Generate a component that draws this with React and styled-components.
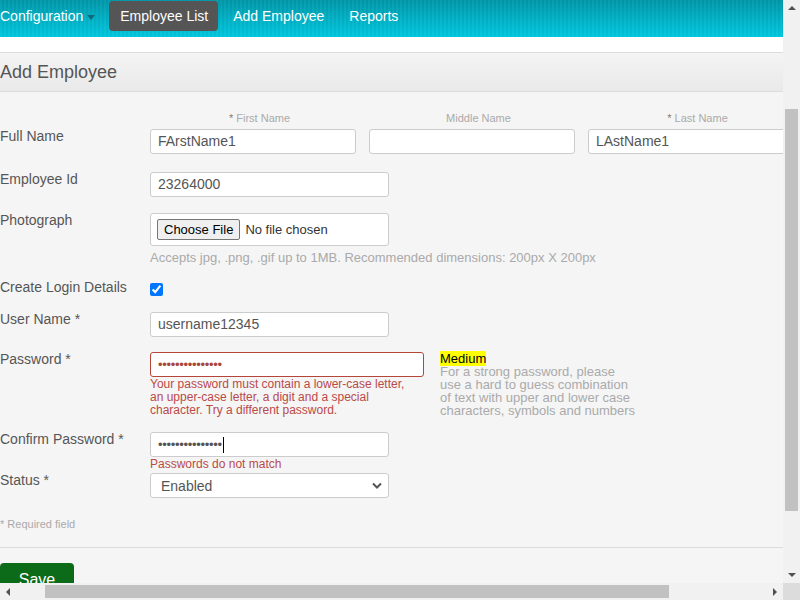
import React from "react";
import styled, { createGlobalStyle } from "styled-components";

const Global = createGlobalStyle`
  html, body { margin: 0; padding: 0; overflow: hidden; }
  body { font-family: "Liberation Sans", Arial, sans-serif; background: #f5f5f5; }
`;

export default function App() {
  return (
    <>
      <Global />
      <Viewport>
        <Content>
          <NavBar>
            <NavItem $first>
              Configuration <Caret />
            </NavItem>
            <NavItem $active>Employee List</NavItem>
            <NavItem>Add Employee</NavItem>
            <NavItem>Reports</NavItem>
          </NavBar>
          <Band />
          <Heading>Add Employee</Heading>

          <Form>
            <Row $mt={20}>
              <Label />
              <SubLabel>
                <Star>* </Star>First Name
              </SubLabel>
              <SubLabel>Middle Name</SubLabel>
              <SubLabel>
                <Star>* </Star>Last Name
              </SubLabel>
            </Row>

            <Row $mt={4}>
              <Label>Full Name</Label>
              <TextBox $w={206} $gap={13}>FArstName1</TextBox>
              <TextBox $w={206} $gap={13} />
              <TextBox $w={206}>LAstName1</TextBox>
            </Row>

            <Row $mt={18}>
              <Label>Employee Id</Label>
              <TextBox $w={239}>23264000</TextBox>
            </Row>

            <Row $mt={16}>
              <Label>Photograph</Label>
              <FileBox>
                <FileButton>Choose File</FileButton>
                <span>No file chosen</span>
              </FileBox>
            </Row>
            <Row $mt={5}>
              <Label />
              <Hint>Accepts jpg, .png, .gif up to 1MB. Recommended dimensions: 200px X 200px</Hint>
            </Row>

            <Row $mt={15}>
              <Label>Create Login Details</Label>
              <Check type="checkbox" defaultChecked />
            </Row>

            <Row $mt={16}>
              <Label>User Name *</Label>
              <TextBox $w={239}>username12345</TextBox>
            </Row>

            <Row $mt={15}>
              <Label>Password *</Label>
              <Column>
                <TextBox $w={274} $error>
                  <Dots $error>•••••••••••••••</Dots>
                </TextBox>
                <ErrorText>
                  Your password must contain a lower-case letter,
                  <br />
                  an upper-case letter, a digit and a special
                  <br />
                  character. Try a different password.
                </ErrorText>
              </Column>
              <Strength>
                <Medium>Medium</Medium>
                <StrengthHint>
                  For a strong password, please
                  <br />
                  use a hard to guess combination
                  <br />
                  of text with upper and lower case
                  <br />
                  characters, symbols and numbers
                </StrengthHint>
              </Strength>
            </Row>

            <Row $mt={15}>
              <Label>Confirm Password *</Label>
              <Column>
                <TextBox $w={239}>
                  <Dots>•••••••••••••••</Dots>
                  <TextCaret />
                </TextBox>
                <ErrorText>Passwords do not match</ErrorText>
              </Column>
            </Row>

            <Row $mt={2}>
              <Label>Status *</Label>
              <SelectBox>
                <span>Enabled</span>
                <svg width="10" height="7" viewBox="0 0 10 7">
                  <path d="M1 1.5l4 4 4-4" fill="none" stroke="#555" strokeWidth="2" />
                </svg>
              </SelectBox>
            </Row>

            <Required>* Required field</Required>
            <Divider />
            <SaveButton>Save</SaveButton>
          </Form>
        </Content>

        <VScroll>
          <Arrow $dir="up" />
          <VThumb />
          <Arrow $dir="down" />
        </VScroll>
        <HScroll>
          <Arrow $dir="left" />
          <HThumb />
          <Arrow $dir="right" />
        </HScroll>
        <Corner />
      </Viewport>
    </>
  );
}

// styles
const Viewport = styled.div`
  width: 800px;
  height: 600px;
  display: grid;
  grid-template-columns: 783px 17px;
  grid-template-rows: 583px 17px;
  overflow: hidden;
`;

const Content = styled.div`
  overflow: hidden;
  background: #f5f5f5;
  color: #555;
`;

const NavBar = styled.nav`
  height: 37px;
  box-sizing: border-box;
  padding-top: 1px;
  display: flex;
  align-items: flex-start;
  background: repeating-linear-gradient(
      90deg,
      rgba(255, 255, 255, 0.035) 0 2px,
      rgba(0, 0, 0, 0.02) 2px 4px
    ),
    linear-gradient(#0097a9, #00c7df);
`;

const NavItem = styled.div`
  height: 30px;
  line-height: 30px;
  padding: ${(p) => (p.$first ? "0 14px 0 0" : "0 10px 0 11px")};
  margin-right: ${(p) => (p.$first ? "0" : "4px")};
  font-size: 14px;
  color: #fff;
  border-radius: 4px;
  white-space: nowrap;
  display: flex;
  align-items: center;
  background: ${(p) => (p.$active ? "#555" : "transparent")};
`;

const Caret = styled.span`
  display: inline-block;
  margin-left: 4px;
  margin-top: 2px;
  border-left: 4px solid transparent;
  border-right: 4px solid transparent;
  border-top: 5px solid #0b6c7a;
`;

const Band = styled.div`
  height: 15px;
  background: #fff;
`;

const Heading = styled.h1`
  margin: 0;
  height: 38px;
  line-height: 38px;
  font-size: 18px;
  font-weight: normal;
  color: #555;
  border-top: 1px solid #dcdcdc;
  border-bottom: 1px solid #dcdcdc;
  background: linear-gradient(#f4f4f4, #e9e9e9);
`;

const Form = styled.div`
  display: flex;
  flex-direction: column;
`;

const Row = styled.div`
  display: flex;
  align-items: flex-start;
  margin-top: ${(p) => p.$mt || 0}px;
`;

const Label = styled.div`
  width: 150px;
  flex: none;
  font-size: 14px;
  line-height: 14px;
  color: #555;
  white-space: nowrap;
`;

const SubLabel = styled.div`
  width: 219px;
  flex: none;
  text-align: center;
  font-size: 11px;
  line-height: 13px;
  color: #aaa;
`;

const Star = styled.span`
  color: #8a7a6a;
`;

const TextBox = styled.div`
  width: ${(p) => p.$w}px;
  height: 25px;
  flex: none;
  box-sizing: border-box;
  margin-right: ${(p) => p.$gap || 0}px;
  padding: 0 7px;
  border: 1px solid ${(p) => (p.$error ? "#b5473a" : "#ccc")};
  border-radius: 3px;
  background: #fff;
  font-size: 14px;
  line-height: 23px;
  color: #555;
  display: flex;
  align-items: center;
  white-space: nowrap;
`;

const Dots = styled.span`
  font-size: 13px;
  letter-spacing: -0.3px;
  color: ${(p) => (p.$error ? "#a8473a" : "#555")};
`;

const TextCaret = styled.span`
  width: 1px;
  height: 16px;
  background: #000;
  margin-left: 1px;
`;

const FileBox = styled.div`
  width: 239px;
  height: 33px;
  box-sizing: border-box;
  padding: 0 6px;
  border: 1px solid #ccc;
  border-radius: 3px;
  background: #fff;
  display: flex;
  align-items: center;
  gap: 5px;
  font-size: 13px;
  color: #333;
`;

const FileButton = styled.div`
  height: 21px;
  box-sizing: border-box;
  padding: 0 6px;
  border: 1px solid #767676;
  border-radius: 2px;
  background: #efefef;
  color: #000;
  font-size: 13px;
  line-height: 19px;
`;

const Hint = styled.div`
  font-size: 13px;
  line-height: 14px;
  color: #aaa;
  white-space: nowrap;
`;

const Check = styled.input`
  margin: 3px 0 0;
  width: 13px;
  height: 13px;
  accent-color: #0075ff;
`;

const Column = styled.div`
  display: flex;
  flex-direction: column;
`;

const ErrorText = styled.div`
  margin-top: 1px;
  font-size: 12px;
  line-height: 13px;
  color: #b94a48;
  white-space: nowrap;
`;

const Strength = styled.div`
  margin-left: 16px;
  font-size: 13px;
  line-height: 13px;
`;

const Medium = styled.span`
  background: #ffff00;
  color: #000;
`;

const StrengthHint = styled.div`
  color: #aaa;
  white-space: nowrap;
`;

const SelectBox = styled.div`
  width: 239px;
  height: 25px;
  box-sizing: border-box;
  padding: 0 6px 0 10px;
  border: 1px solid #ccc;
  border-radius: 3px;
  background: #fff;
  display: flex;
  align-items: center;
  justify-content: space-between;
  font-size: 14px;
  color: #555;
`;

const Required = styled.div`
  margin-top: 20px;
  font-size: 11px;
  line-height: 13px;
  color: #aaa;
`;

const Divider = styled.div`
  margin-top: 16px;
  height: 1px;
  background: #dcdcdc;
`;

const SaveButton = styled.div`
  margin-top: 15px;
  width: 74px;
  height: 34px;
  border-radius: 4px;
  background: #0b6b18;
  color: #fff;
  font-size: 16px;
  line-height: 34px;
  text-align: center;
`;

const VScroll = styled.div`
  background: #f1f1f1;
  display: flex;
  flex-direction: column;
  align-items: center;
`;

const HScroll = styled.div`
  background: #f1f1f1;
  display: flex;
  align-items: center;
`;

const Corner = styled.div`
  background: #dcdcdc;
`;

const VThumb = styled.div`
  margin-top: 99px;
  width: 13px;
  height: 402px;
  background: #c1c1c1;
`;

const HThumb = styled.div`
  margin-left: 35px;
  height: 13px;
  width: 624px;
  background: #c1c1c1;
  margin-right: auto;
`;

const arrows = {
  up: "border-left: 4px solid transparent; border-right: 4px solid transparent; border-bottom: 4px solid #505050;",
  down: "border-left: 4px solid transparent; border-right: 4px solid transparent; border-top: 4px solid #505050;",
  left: "border-top: 4px solid transparent; border-bottom: 4px solid transparent; border-right: 4px solid #505050;",
  right: "border-top: 4px solid transparent; border-bottom: 4px solid transparent; border-left: 4px solid #505050;",
};

const Arrow = styled.div`
  flex: none;
  width: 0;
  height: 0;
  ${(p) => arrows[p.$dir]}
  margin: ${(p) =>
    p.$dir === "up"
      ? "6px 0 0"
      : p.$dir === "down"
      ? "auto 0 6px"
      : p.$dir === "left"
      ? "0 0 0 6px"
      : "0 6px 0 0"};
`;
